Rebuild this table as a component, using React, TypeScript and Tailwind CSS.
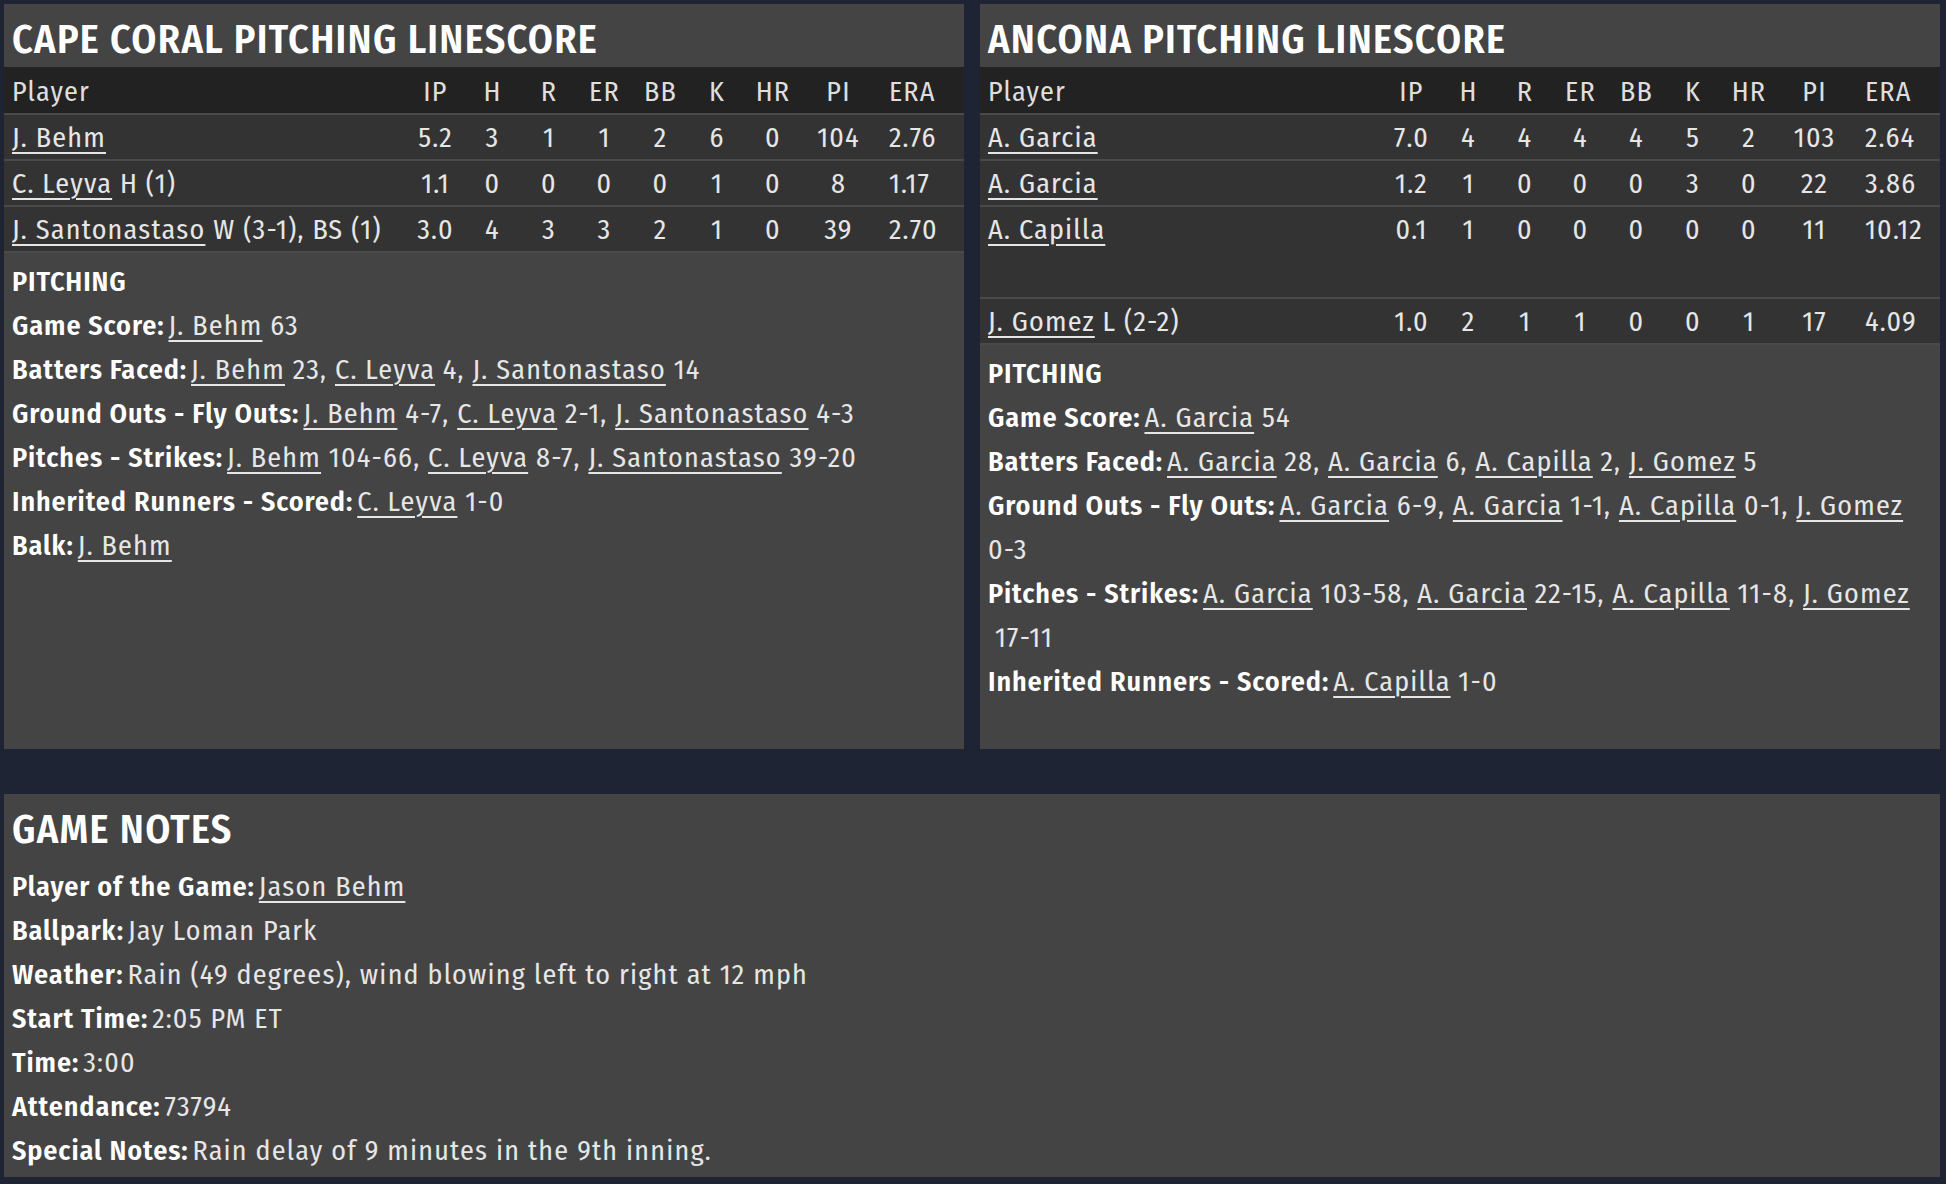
import React from "react";

type Row = { name: string; extra?: string; stats: string[]; blank?: boolean };

const cols = ["IP", "H", "R", "ER", "BB", "K", "HR", "PI", "ERA"];

const capeRows: Row[] = [
  { name: "J. Behm", stats: ["5.2", "3", "1", "1", "2", "6", "0", "104", "2.76"] },
  { name: "C. Leyva", extra: "H (1)", stats: ["1.1", "0", "0", "0", "0", "1", "0", "8", "1.17"] },
  { name: "J. Santonastaso", extra: "W (3-1), BS (1)", stats: ["3.0", "4", "3", "3", "2", "1", "0", "39", "2.70"] },
];

const anconaRows: Row[] = [
  { name: "A. Garcia", stats: ["7.0", "4", "4", "4", "4", "5", "2", "103", "2.64"] },
  { name: "A. Garcia", stats: ["1.2", "1", "0", "0", "0", "3", "0", "22", "3.86"] },
  { name: "A. Capilla", stats: ["0.1", "1", "0", "0", "0", "0", "0", "11", "10.12"] },
  { name: "", stats: [], blank: true },
  { name: "J. Gomez", extra: "L (2-2)", stats: ["1.0", "2", "1", "1", "0", "0", "1", "17", "4.09"] },
];

function L({ children }: { children: React.ReactNode }) {
  return <span className="underline decoration-2 underline-offset-[5px] cursor-pointer">{children}</span>;
}

function Label({ children }: { children: React.ReactNode }) {
  return <span className="font-semibold text-white tracking-[0.9px] mr-[4px]">{children}</span>;
}

const GRID = "grid grid-cols-[1fr_57px_57px_56px_55px_57px_56px_56px_75px_88px] items-center pl-2";

function StatTable({ rows }: { rows: Row[] }) {
  return (
    <div>
      <div className={`${GRID} h-[46px] pt-[4px] bg-[#222222] text-[#dedede]`}>
        <div>Player</div>
        {cols.map((c) =>
          c === "ERA" ? (
            <div key={c} className="pl-[13px] whitespace-nowrap">{c}</div>
          ) : (
            <div key={c} className="text-center whitespace-nowrap">{c}</div>
          )
        )}
      </div>
      {rows.map((r, i) =>
        r.blank ? (
          <div key={i} className="h-[46px] bg-[#333333]" />
        ) : (
          <div key={i} className={`${GRID} h-[46px] pt-[2px] bg-[#333333] border-t-2 border-[#4a4a4a] text-[#e6e6e6]`}>
            <div className="whitespace-nowrap">
              <L>{r.name}</L>
              {r.extra ? <span> {r.extra}</span> : null}
            </div>
            {r.stats.map((s, j) =>
              j === 8 ? (
                <div key={j} className="pl-[13px] whitespace-nowrap">{s}</div>
              ) : (
                <div key={j} className="text-center whitespace-nowrap">{s}</div>
              )
            )}
          </div>
        )
      )}
      <div className="h-[2px] bg-[#4a4a4a]" />
    </div>
  );
}

function Title({ children }: { children: React.ReactNode }) {
  return (
    <div className="h-[63px] flex items-center pt-[9px] px-2 text-[40px] font-semibold text-white leading-none tracking-[1.3px]">
      {children}
    </div>
  );
}

function Panel({ title, children }: { title: string; children: React.ReactNode }) {
  return (
    <div className="flex flex-col bg-[#444444] h-[745px] w-[960px]">
      <Title>{title}</Title>
      {children}
    </div>
  );
}

export default function App() {
  return (
    <div className="min-h-[1184px] w-[1946px] bg-[#1e2433] pt-[4px] pl-[4px] font-['Fira_Sans_Condensed','Open_Sans',sans-serif] text-[28px] tracking-[1.2px] text-[#e6e6e6]">
      <div className="flex gap-[16px]">
        <Panel title="CAPE CORAL PITCHING LINESCORE">
          <StatTable rows={capeRows} />
          <div className="px-2 pt-[7px] leading-[44px]">
            <div className="font-semibold text-white tracking-[0.9px]">PITCHING</div>
            <div>
              <Label>Game Score:</Label>
              <L>J. Behm</L> 63
            </div>
            <div>
              <Label>Batters Faced:</Label>
              <L>J. Behm</L> 23, <L>C. Leyva</L> 4, <L>J. Santonastaso</L> 14
            </div>
            <div>
              <Label>Ground Outs - Fly Outs:</Label>
              <L>J. Behm</L> 4-7, <L>C. Leyva</L> 2-1, <L>J. Santonastaso</L> 4-3
            </div>
            <div>
              <Label>Pitches - Strikes:</Label>
              <L>J. Behm</L> 104-66, <L>C. Leyva</L> 8-7, <L>J. Santonastaso</L> 39-20
            </div>
            <div>
              <Label>Inherited Runners - Scored:</Label>
              <L>C. Leyva</L> 1-0
            </div>
            <div>
              <Label>Balk:</Label>
              <L>J. Behm</L>
            </div>
          </div>
        </Panel>
        <Panel title="ANCONA PITCHING LINESCORE">
          <StatTable rows={anconaRows} />
          <div className="px-2 pt-[7px] leading-[44px]">
            <div className="font-semibold text-white tracking-[0.9px]">PITCHING</div>
            <div>
              <Label>Game Score:</Label>
              <L>A. Garcia</L> 54
            </div>
            <div>
              <Label>Batters Faced:</Label>
              <L>A. Garcia</L> 28, <L>A. Garcia</L> 6, <L>A. Capilla</L> 2, <L>J. Gomez</L> 5
            </div>
            <div>
              <span className="whitespace-nowrap">
                <Label>Ground Outs - Fly Outs:</Label>
                <L>A. Garcia</L> 6-9, <L>A. Garcia</L> 1-1, <L>A. Capilla</L> 0-1, <L>J. Gomez</L>
              </span>
              <br />
              0-3
            </div>
            <div>
              <span className="whitespace-nowrap">
                <Label>Pitches - Strikes:</Label>
                <L>A. Garcia</L> 103-58, <L>A. Garcia</L> 22-15, <L>A. Capilla</L> 11-8, <L>J. Gomez</L>
              </span>
              <br />
              <span className="pl-[7px]">17-11</span>
            </div>
            <div>
              <Label>Inherited Runners - Scored:</Label>
              <L>A. Capilla</L> 1-0
            </div>
          </div>
        </Panel>
      </div>
      <div className="mt-[45px] w-[1936px] h-[383px] bg-[#444444] flex flex-col">
        <Title>GAME NOTES</Title>
        <div className="px-2 pt-[8px] leading-[44px]">
          <div>
            <Label>Player of the Game:</Label>
            <L>Jason Behm</L>
          </div>
          <div>
            <Label>Ballpark:</Label>Jay Loman Park
          </div>
          <div>
            <Label>Weather:</Label>Rain (49 degrees), wind blowing left to right at 12 mph
          </div>
          <div>
            <Label>Start Time:</Label>2:05 PM ET
          </div>
          <div>
            <Label>Time:</Label>3:00
          </div>
          <div>
            <Label>Attendance:</Label>73794
          </div>
          <div>
            <Label>Special Notes:</Label>Rain delay of 9 minutes in the 9th inning.
          </div>
        </div>
      </div>
    </div>
  );
}
